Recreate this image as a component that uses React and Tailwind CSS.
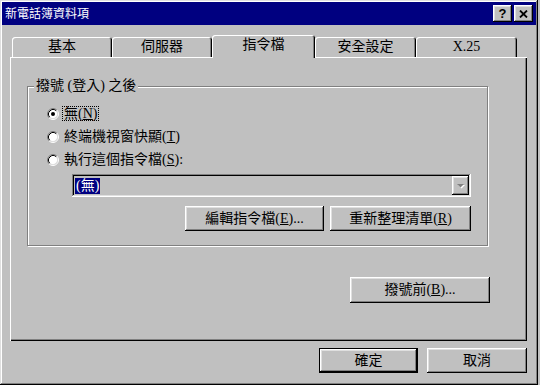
import React from "react";

const raised =
  "shadow-[inset_-1px_-1px_0_#000,inset_1px_1px_0_#fff,inset_-2px_-2px_0_#808080,inset_2px_2px_0_#dfdfdf]";
const sunken =
  "shadow-[inset_-1px_-1px_0_#fff,inset_1px_1px_0_#808080,inset_-2px_-2px_0_#dfdfdf,inset_2px_2px_0_#000]";

function U({ children }) {
  return <span className="underline underline-offset-[1px]">{children}</span>;
}

function Button({ className = "", children }) {
  return (
    <div
      className={`flex items-center justify-center bg-[#c0c0c0] text-black ${raised} ${className}`}
    >
      {children}
    </div>
  );
}

function Radio({ checked }) {
  return (
    <svg width="12" height="12" viewBox="0 0 12 12" className="shrink-0">
      <circle cx="6" cy="6" r="4.5" fill="#fff" />
      <path d="M2.11 9.89 A5.5 5.5 0 0 1 9.89 2.11" stroke="#808080" fill="none" />
      <path d="M9.89 2.11 A5.5 5.5 0 0 1 2.11 9.89" stroke="#fff" fill="none" />
      <path d="M2.82 9.18 A4.5 4.5 0 0 1 9.18 2.82" stroke="#000" fill="none" />
      <path d="M9.18 2.82 A4.5 4.5 0 0 1 2.82 9.18" stroke="#dfdfdf" fill="none" />
      {checked && <circle cx="6" cy="6" r="2" fill="#000" />}
    </svg>
  );
}

function Tab({ label, selected, w }) {
  if (selected) {
    return (
      <div
        className={`relative z-10 -mb-[1px] flex h-[23px] items-start justify-center rounded-t-[3px] bg-[#c0c0c0] pt-[2px] shadow-[inset_1px_1px_0_#fff,inset_-1px_0_0_#000,inset_-2px_0_0_#808080] ${w}`}
      >
        {label}
      </div>
    );
  }
  return (
    <div
      className={`flex h-[20px] items-start justify-center rounded-t-[3px] bg-[#c0c0c0] pt-[2px] shadow-[inset_1px_1px_0_#fff,inset_-1px_0_0_#000,inset_-2px_0_0_#808080] ${w}`}
    >
      {label}
    </div>
  );
}

export default function App() {
  return (
    <div className="h-[385px] w-[540px] bg-[#c0c0c0] font-['Liberation_Serif','Noto_Sans_CJK_TC','Noto_Sans_CJK_SC',serif] text-[14px] leading-[16px] text-black">
      <div className="flex h-[385px] w-[538px] flex-col bg-[#c0c0c0] p-[2px] shadow-[inset_-1px_-1px_0_#000,inset_1px_1px_0_#dfdfdf,inset_-2px_-2px_0_#808080,inset_2px_2px_0_#fff]">
        {/* Title bar */}
        <div className="flex h-[23px] items-center justify-between bg-[#000080] pl-[3px] pr-[3px]">
          <span className="text-[12px] leading-[14px] text-white">新電話簿資料項</span>
          <div className="flex gap-[2px]">
            <div className={`flex h-[17px] w-[19px] items-center justify-center ${raised} bg-[#c0c0c0]`}>
              <span className="font-['Liberation_Sans',sans-serif] text-[13px] font-bold leading-none">?</span>
            </div>
            <div className={`flex h-[17px] w-[19px] items-center justify-center ${raised} bg-[#c0c0c0]`}>
              <svg width="9" height="8" viewBox="0 0 9 8">
                <path d="M1 0.5 L8 7.5 M8 0.5 L1 7.5" stroke="#000" strokeWidth="1.8" />
              </svg>
            </div>
          </div>
        </div>

        {/* Content */}
        <div className="flex flex-col px-[8px] pt-[10px]">
          {/* Tabs */}
          <div className="flex h-[22px] items-end pl-[2px]">
            <Tab label="基本" w="w-[100px]" />
            <Tab label="伺服器" w="w-[100px]" />
            <Tab label="指令檔" w="w-[103px]" selected />
            <Tab label="安全設定" w="w-[101px]" />
            <Tab label="X.25" w="w-[101px]" />
          </div>

          {/* Panel */}
          <div className="relative z-0 flex h-[284px] w-[517px] flex-col bg-[#c0c0c0] shadow-[inset_1px_1px_0_#fff,inset_-1px_-1px_0_#000,inset_-2px_-2px_0_#808080]">
            {/* Group box */}
            <div className="relative ml-[17px] mt-[29px] h-[160px] w-[461px] border border-[#808080] shadow-[1px_1px_0_#fff,inset_1px_1px_0_#fff]">
              <span className="absolute -top-[9px] left-[6px] bg-[#c0c0c0] px-[2px]">
                撥號 (登入) 之後
              </span>
              <div className="flex flex-col pl-[19px] pt-[15px]">
                <div className="flex h-[23px] items-center gap-[4px]">
                  <Radio checked />
                  <span className="px-[1px] leading-[13px] outline outline-1 outline-dotted outline-black">
                    無(<U>N</U>)
                  </span>
                </div>
                <div className="flex h-[23px] items-center gap-[5px]">
                  <Radio />
                  <span>
                    終端機視窗快顯(<U>T</U>)
                  </span>
                </div>
                <div className="flex h-[23px] items-center gap-[5px]">
                  <Radio />
                  <span>
                    執行這個指令檔(<U>S</U>):
                  </span>
                </div>

                {/* Combo */}
                <div
                  className={`ml-[25px] mt-[3px] flex h-[23px] w-[399px] items-center justify-between bg-[#c0c0c0] p-[2px] ${sunken}`}
                >
                  <span className="ml-[1px] bg-[#000080] px-[1px] text-white outline outline-1 outline-dotted outline-[#c0c0c0]">
                    (無)
                  </span>
                  <div className={`flex h-[19px] w-[17px] items-center justify-center ${raised}`}>
                    <svg width="9" height="6" viewBox="0 0 9 6">
                      <path d="M1 1 H8 L4.5 4.5 Z" fill="#fff" transform="translate(1,1)" />
                      <path d="M1 1 H8 L4.5 4.5 Z" fill="#808080" />
                    </svg>
                  </div>
                </div>

                {/* Buttons row */}
                <div className="ml-[25px] mt-[9px] flex w-[399px] justify-end gap-[6px]">
                  <Button className="h-[25px] w-[139px]">
                    編輯指令檔(<U>E</U>)...
                  </Button>
                  <Button className="h-[25px] w-[141px]">
                    重新整理清單(<U>R</U>)
                  </Button>
                </div>
              </div>
            </div>

            <div className="mr-[37px] mt-[31px] flex justify-end">
              <Button className="h-[26px] w-[140px]">
                撥號前(<U>B</U>)...
              </Button>
            </div>
          </div>

          {/* Bottom buttons */}
          <div className="mt-[7px] flex w-[517px] justify-end gap-[9px]">
            <div className="h-[25px] w-[99px] border border-black">
              <Button className="h-[23px] w-[97px]">確定</Button>
            </div>
            <Button className="h-[25px] w-[100px]">取消</Button>
          </div>
        </div>
      </div>
    </div>
  );
}
